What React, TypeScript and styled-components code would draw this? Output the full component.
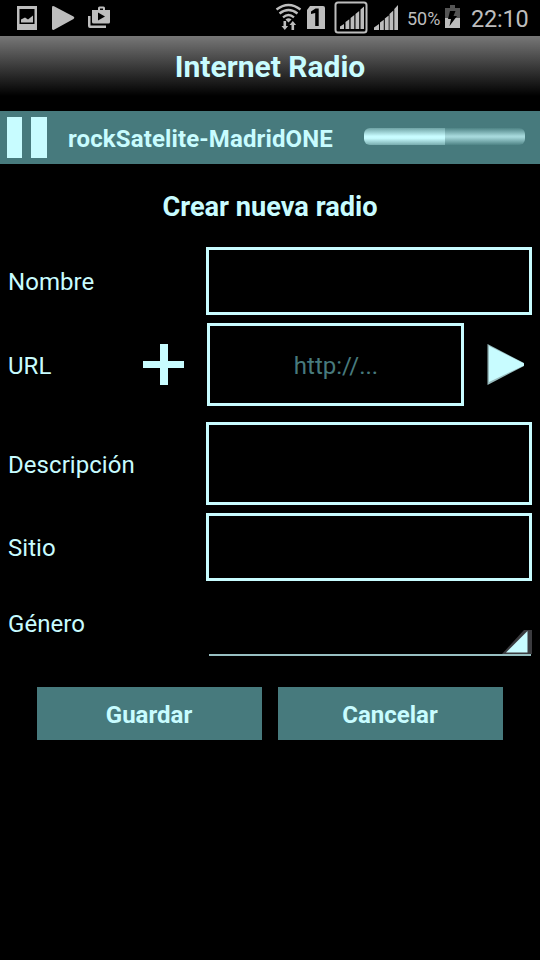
import React from 'react';
import styled, { createGlobalStyle } from 'styled-components';

const ice = '#c8fcff';
const teal = '#477a7d';
const gray = '#bdbdbd';

const GlobalStyle = createGlobalStyle`
  * { box-sizing: border-box; }
  body { margin: 0; background: #000; font-family: Roboto, sans-serif; }
`;

const Screen = styled.main`
  width: 540px;
  height: 960px;
  background: #000;
  color: ${ice};
  overflow: hidden;
`;

const StatusBar = styled.div`
  height: 36px;
  display: flex;
  justify-content: space-between;
  color: ${gray};
  svg { display: block; flex: none; }
`;

const Clock = styled.span`
  width: 69px;
  font-size: 23.5px;
  line-height: 38px;
  letter-spacing: -0.2px;
  white-space: nowrap;
`;

const Battery = styled.span`
  width: 38px;
  font-size: 18px;
  line-height: 38px;
  white-space: nowrap;
`;

const StatusGroup = styled.div`
  display: flex;
`;

const Header = styled.header`
  height: 75px;
  display: flex;
  justify-content: center;
  background: linear-gradient(#777 0, #000 60px);
`;

const HeaderTitle = styled.h1`
  margin: 0;
  font-size: 30px;
  font-weight: 700;
  line-height: 62px;
  white-space: nowrap;
`;

const Player = styled.section`
  height: 53px;
  display: flex;
  align-items: center;
  background: ${teal};
`;

const PauseButton = styled.button`
  width: 68px;
  height: 53px;
  padding: 6px 0 6px 6.5px;
  border: 0;
  background: none;
  display: flex;
  gap: 9px;
`;

const PauseBar = styled.span`
  width: 15.5px;
  height: 41px;
  background: ${ice};
`;

const Station = styled.span`
  width: 296px;
  font-size: 24px;
  font-weight: 700;
  line-height: 54px;
  padding-top: 2px;
  letter-spacing: 0.12px;
  white-space: nowrap;
`;

const Volume = styled.div`
  display: flex;
  width: 161px;
  height: 17px;
  margin-bottom: 2px;
  border-radius: 6px;
  overflow: hidden;
`;

const VolumeLevel = styled.div<{ $on?: boolean }>`
  flex: 1;
  background: ${(p) =>
    p.$on
      ? `linear-gradient(#6fa3a5, ${ice} 48%, ${ice} 60%, #78acae)`
      : 'linear-gradient(#4e8385, #a8dadd 48%, #a2d4d7 56%, #4e8385)'};
`;

const FormTitle = styled.h2`
  margin: 0;
  height: 83px;
  font-size: 27.2px;
  font-weight: 700;
  line-height: 86px;
  text-align: center;
  white-space: nowrap;
`;

const Row = styled.div<{ $height: number; $gap: number }>`
  height: ${(p) => p.$height}px;
  margin-bottom: ${(p) => p.$gap}px;
  padding: 0 8px;
  display: flex;
  align-items: center;
`;

const Label = styled.label<{ $width?: number; $drop?: number }>`
  width: ${(p) => p.$width ?? 198}px;
  padding-top: ${(p) => p.$drop ?? 1}px;
  font-size: 24px;
  line-height: 30px;
  letter-spacing: 0.05px;
  white-space: nowrap;
`;

const Field = styled.input`
  flex: 1;
  min-width: 0;
  height: 100%;
  padding: 2px 0 0 1px;
  border: 3px solid ${ice};
  border-radius: 0;
  background: #000;
  color: ${ice};
  font: 24px Roboto, sans-serif;
  text-align: center;
  outline: 0;
  &::placeholder { color: ${teal}; opacity: 1; }
`;

const IconButton = styled.button<{ $width: number }>`
  width: ${(p) => p.$width}px;
  height: 42px;
  padding: 0;
  border: 0;
  background: none;
  svg { display: block; }
`;

const Spinner = styled.div`
  flex: 1;
  height: 100%;
  display: flex;
  align-items: flex-end;
  justify-content: flex-end;
  margin-left: 3px;
  margin-right: 1px;
  border-bottom: 2px solid #98bfc1;
  svg { display: block; margin-right: -1px; }
`;

const Actions = styled.div`
  display: flex;
  gap: 16px;
  padding: 0 37px;
`;

const ActionButton = styled.button`
  flex: 1;
  height: 53px;
  padding: 3px 1px 0 0;
  border: 0;
  background: ${teal};
  color: ${ice};
  font: 700 24px Roboto, sans-serif;
`;

const NotificationIcons = () => (
  <svg width="120" height="36" fill={gray}>
    <path fillRule="evenodd" d="M17 6h20v24H17zM19.500 9v15h15V9zM21 22.500v-3l4-2 3 2 5-4v7z" />
    <path d="M52 7.500q0-2 2-1.200L73.500 16.500q1.800 1.200 0 2.400L54 29.700q-2 .8-2-1.200z" />
    <path fillRule="evenodd" d="M92 10h6V8q0-1.500 1.500-1.500h4Q105 6.500 105 8v2h5v12q0 1.500-1.500 1.500h-15Q92 23.500 92 22zm8 0h3V8.500h-3zM98 12.500v8l7-4z" />
    <path d="M88 16h2.500v9.500H106V28H90q-2 0-2-2z" />
  </svg>
);

const NetworkIcons = () => (
  <svg width="132" height="36" viewBox="275 0 132 36" fill={gray}>
    <g fill="none" stroke={gray} strokeWidth="2.300">
      <path d="M276.500 9.500q12-9 24 0M279.500 13.500q9-7 18 0M283 17.300q5.500-4.500 11 0" />
    </g>
    <path d="M285.500 19.500q3-2.300 6 0l-3 3z" />
    <path d="M283.500 21h2.600v5h2l-3.300 4-3.300-4h2zM291.500 30h2.600v-5h2l-3.300-4-3.300 4h2z" />
    <path d="M310 6h13q2 0 2 2v21H307V10z" />
    <path d="M311 14v-2.500l4.500-3h3.200V26h-3.500V13z" fill="#000" />
    <rect x="335.500" y="2.500" width="31" height="30" rx="2.500" fill="none" stroke={gray} strokeWidth="2" />
    <path d="M340 29v-2.500l4-2.500v5zM345.500 29v-7l3.800-2.800V29zM350.600 29V18l3.700-3V29zM355.500 29V14l3.700-3v18zM360.500 29V9.500l3.500-3V29z" />
    <path d="M374 30v-2.500l5-3.500v6zM380 30v-7.500l3.800-2.800V30zM384.800 30V18.500l3.900-3V30zM389.500 30V14l3.800-3.500V30zM394.300 30V9l3.700-4v25z" />
  </svg>
);

const BatteryIcon = () => (
  <svg width="26" height="36" viewBox="445 0 26 36">
    <path d="M445 8h5V5h5v3h5v20h-15z" fill="#555" />
    <path d="M445 18h15v10h-15z" fill={gray} />
    <path d="M450 11h5.500l-2 5h3.500L449.500 26l1.500-7h-3z" fill="#000" />
  </svg>
);

export default function App() {
  return (
    <Screen>
      <GlobalStyle />
      <StatusBar>
        <NotificationIcons />
        <StatusGroup>
          <NetworkIcons />
          <Battery>50%</Battery>
          <BatteryIcon />
          <Clock>22:10</Clock>
        </StatusGroup>
      </StatusBar>
      <Header>
        <HeaderTitle>Internet Radio</HeaderTitle>
      </Header>
      <Player>
        <PauseButton aria-label="Pausa">
          <PauseBar />
          <PauseBar />
        </PauseButton>
        <Station>rockSatelite-MadridONE</Station>
        <Volume>
          <VolumeLevel $on />
          <VolumeLevel />
        </Volume>
      </Player>
      <FormTitle>Crear nueva radio</FormTitle>
      <Row $height={68} $gap={8}>
        <Label>Nombre</Label>
        <Field />
      </Row>
      <Row $height={83} $gap={16}>
        <Label $width={135} $drop={3}>URL</Label>
        <IconButton $width={64} aria-label="Añadir">
          <svg width="42" height="42">
            <path d="M17 0h8v17h16v7H25v17h-8V24H0v-7h17z" fill={ice} />
          </svg>
        </IconButton>
        <Field placeholder="http://..." />
        <IconButton $width={68} aria-label="Reproducir">
          <svg width="68" height="42">
            <path d="M23.500 0 60 19v3L23.500 41z" fill="#99bcbe" />
            <path d="M25 2 60 19.500v2L25 38z" fill={ice} />
          </svg>
        </IconButton>
      </Row>
      <Row $height={83} $gap={8}>
        <Label $drop={3}>Descripción</Label>
        <Field />
      </Row>
      <Row $height={68} $gap={10}>
        <Label>Sitio</Label>
        <Field />
      </Row>
      <Row $height={65} $gap={31}>
        <Label>Género</Label>
        <Spinner>
          <svg width="30" height="24">
            <path d="M0 24 22 0h8v24z" fill="#3b3b3f" />
            <path d="M4 22.500 25.500 1v21.500z" fill={ice} />
          </svg>
        </Spinner>
      </Row>
      <Actions>
        <ActionButton>Guardar</ActionButton>
        <ActionButton>Cancelar</ActionButton>
      </Actions>
    </Screen>
  );
}
